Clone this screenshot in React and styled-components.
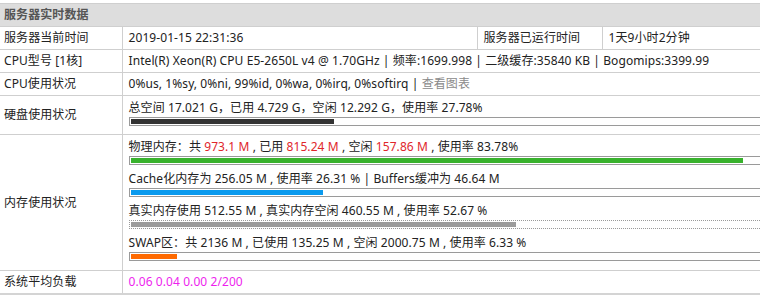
import React from "react";
import styled, { createGlobalStyle } from "styled-components";

const Global = createGlobalStyle`
  html, body { margin: 0; padding: 0; background: #fff; overflow: hidden; }
  body { font-family: "Noto Sans", "Noto Sans CJK SC", sans-serif; font-size: 12px; color: #222; letter-spacing: 0.08px; }
`;

const Wrap = styled.div`
  padding-top: 3px;
  width: 870px;
`;

const Table = styled.table`
  width: 870px;
  border-collapse: collapse;
  table-layout: fixed;
  border-bottom: 2px solid #d4d4d4;
`;

const HeadCell = styled.th`
  background: #dddddd;
  border-top: 1px solid #cfcfcf;
  color: #555;
  font-weight: bold;
  text-align: left;
  height: 22px;
  padding: 0 4px;
  line-height: 18px;
`;

const Row = styled.tr`
  border-top: 1px solid #cfcfcf;
`;

const Label = styled.td`
  width: 122px;
  box-sizing: border-box;
  padding: 2px 4px;
  line-height: 18px;
  height: 22px;
  vertical-align: middle;
  border-right: 1px solid #cfcfcf;
  white-space: nowrap;
`;

const Value = styled.td`
  padding: ${(p) => (p.$stack ? `2px 6px ${p.$stack}px` : "2px 6px")};
  line-height: 18px;
  vertical-align: middle;
  border-right: ${(p) => (p.$divider ? "1px solid #cfcfcf" : "none")};
  white-space: nowrap;
`;

const Item = styled.div`
  margin-bottom: 4px;
`;

const Line = styled.div`
  line-height: 19px;
  height: 19px;
`;

const BarBox = styled.div`
  box-sizing: border-box;
  height: 9px;
  padding: 1px;
  border: 1px ${(p) => (p.$dotted ? "dotted" : "solid")} #9a9a9a;
  background: #fff;
`;

const BarFill = styled.div`
  height: 5px;
  background: ${(p) => p.$color};
`;

const Red = styled.span`
  color: #e0262b;
`;

const Magenta = styled.span`
  color: #ee1fee;
`;

const Muted = styled.span`
  color: #8a8a8a;
`;

function Bar({ pct, color, dotted }) {
  return (
    <BarBox $dotted={dotted}>
      <BarFill $color={color} style={{ width: `${pct}%` }} />
    </BarBox>
  );
}

export default function App() {
  return (
    <Wrap>
      <Global />
      <Table>
        <colgroup>
          <col style={{ width: 122 }} />
          <col style={{ width: 355 }} />
          <col style={{ width: 125 }} />
          <col />
        </colgroup>
        <thead>
          <tr>
            <HeadCell colSpan={4}>服务器实时数据</HeadCell>
          </tr>
        </thead>
        <tbody>
          <Row>
            <Label>服务器当前时间</Label>
            <Value $divider>2019-01-15 22:31:36</Value>
            <Value $divider>服务器已运行时间</Value>
            <Value>1天9小时2分钟</Value>
          </Row>
          <Row>
            <Label>CPU型号 [1核]</Label>
            <Value colSpan={3}>
              Intel(R) Xeon(R) CPU E5-2650L v4 @ 1.70GHz | 频率:1699.998 | 二级缓存:35840 KB | Bogomips:3399.99
            </Value>
          </Row>
          <Row>
            <Label>CPU使用状况</Label>
            <Value colSpan={3}>
              0%us, 1%sy, 0%ni, 99%id, 0%wa, 0%irq, 0%softirq | <Muted>查看图表</Muted>
            </Value>
          </Row>
          <Row>
            <Label>硬盘使用状况</Label>
            <Value colSpan={3} $stack={4}>
              <Item>
                <Line>总空间 17.021 G，已用 4.729 G，空闲 12.292 G，使用率 27.78%</Line>
                <Bar pct={27.78} color="#333333" />
              </Item>
            </Value>
          </Row>
          <Row>
            <Label>内存使用状况</Label>
            <Value colSpan={3} $stack={5}>
              <Item>
                <Line>
                  物理内存：共 <Red>973.1 M</Red> , 已用 <Red>815.24 M</Red> , 空闲 <Red>157.86 M</Red> , 使用率 83.78%
                </Line>
                <Bar pct={83.78} color="#38b22d" />
              </Item>
              <Item>
                <Line>Cache化内存为 256.05 M , 使用率 26.31 % | Buffers缓冲为 46.64 M</Line>
                <Bar pct={26.31} color="#0a9aee" />
              </Item>
              <Item>
                <Line>真实内存使用 512.55 M , 真实内存空闲 460.55 M , 使用率 52.67 %</Line>
                <Bar pct={52.67} color="#9c9c9c" dotted />
              </Item>
              <Item>
                <Line>SWAP区：共 2136 M , 已使用 135.25 M , 空闲 2000.75 M , 使用率 6.33 %</Line>
                <Bar pct={6.33} color="#ff6a00" />
              </Item>
            </Value>
          </Row>
          <Row>
            <Label>系统平均负载</Label>
            <Value colSpan={3}>
              <Magenta>0.06 0.04 0.00 2/200</Magenta>
            </Value>
          </Row>
        </tbody>
      </Table>
    </Wrap>
  );
}
